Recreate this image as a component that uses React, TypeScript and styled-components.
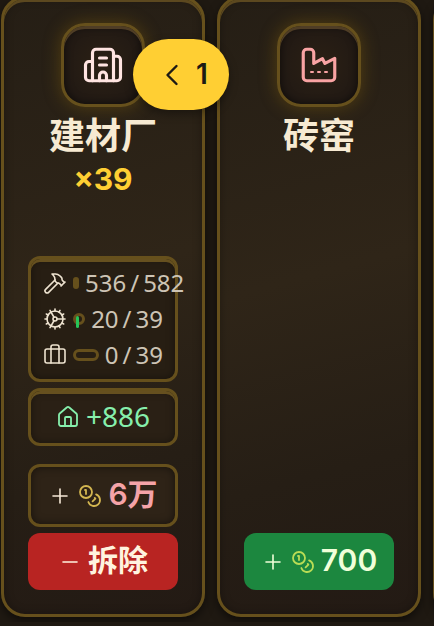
import React from "react";
import styled, { createGlobalStyle, css } from "styled-components";
import { Briefcase, Building2, ChevronLeft, Coins, Cog, Hammer, House, Minus, Plus } from "lucide-react";

const gold = "#66501c";

const GlobalStyle = createGlobalStyle`
  * { box-sizing: border-box; }
  html, body { margin: 0; height: 100%; }
  body {
    overflow: hidden;
    background: #1f1912;
    color: #f7ead2;
    font-family: Inter, "Noto Sans CJK SC", sans-serif;
  }
  button { font: inherit; cursor: pointer; }
`;

const Strip = styled.main`
  display: grid;
  grid-auto-flow: column;
  grid-auto-columns: 204px;
  gap: 12px;
  height: 100vh;
  margin-top: -4px;
  padding: 0 1px 5px;
  overflow: hidden;
`;

const raised = css`
  border: 3px solid ${gold};
  box-shadow: inset 0 3px 0 #66501f, inset 0 0 8px rgba(0, 0, 0, 0.4);
`;

const Card = styled.article`
  display: flex;
  flex-direction: column;
  align-items: center;
  padding: 24px;
  border: 3px solid ${gold};
  border-radius: 24px;
  background: linear-gradient(165deg, #251e15 0%, #2f2518 45%, #261e15 75%, #231a14 100%);
  box-shadow: inset 0 3px 0 #5c481f, inset 0 0 10px rgba(0, 0, 0, 0.3), 0 4px 10px rgba(0, 0, 0, 0.5);
`;

const Emblem = styled.div<{ $tint: string }>`
  display: grid;
  place-items: center;
  width: 84px;
  height: 84px;
  flex: none;
  color: ${(p) => p.$tint};
  border: 3px solid ${gold};
  border-radius: 24px;
  background: radial-gradient(circle, #2b2014 0%, #211914 80%);
  box-shadow: inset 0 3px 0 #4f3d25, inset 0 0 8px rgba(0, 0, 0, 0.6), 0 0 18px rgba(150, 110, 10, 0.4);
`;

const Name = styled.h2`
  margin: 5px 0 0;
  font-size: 36px;
  line-height: 48px;
  font-weight: 700;
`;

const Count = styled.div`
  margin-top: 1px;
  font-size: 30px;
  line-height: 36px;
  font-weight: 700;
  color: #ffcf33;
`;

const Footer = styled.div`
  display: flex;
  flex-direction: column;
  align-self: stretch;
  gap: 6px;
  margin-top: auto;
`;

const Stats = styled.div`
  ${raised}
  padding: 6px 12px;
  border-radius: 12px;
  background: #271e13;
`;

const StatRow = styled.div`
  display: flex;
  align-items: center;
  gap: 6px;
  height: 36px;
  color: #eee3d0;
  svg { flex: none; }
`;

const Meter = styled.div`
  flex: 1;
  min-width: 6px;
  height: 12px;
  border: 3px solid ${gold};
  border-radius: 6px;
`;

const Fill = styled.div`
  height: 12px;
  border-radius: 2px;
  background: #27c458;
`;

const Figure = styled.span`
  flex: none;
  font: 400 24px/36px "Noto Sans", sans-serif;
  color: #cdc4b5;
`;

const Slash = styled.span`
  margin: 0 4px;
`;

const Output = styled.div`
  ${raised}
  display: flex;
  align-items: center;
  justify-content: center;
  gap: 6px;
  height: 58px;
  margin-bottom: 12px;
  border-radius: 12px;
  background: #2a2015;
  color: #86efac;
  font: 400 28px/40px "Noto Sans", sans-serif;
`;

const OutputValue = styled.span`
  padding-bottom: 2px;
`;

const Action = styled.button<{ $kind: "outline" | "danger" | "buy" }>`
  display: flex;
  align-items: center;
  justify-content: center;
  gap: 6px;
  height: 57px;
  padding: 0;
  border: 0;
  border-radius: 12px;
  font-size: 30px;
  line-height: 36px;
  font-weight: 600;
  color: #fff3df;
  ${(p) => p.$kind === "danger" && css`background: #b82422;`}
  ${(p) => p.$kind === "buy" && css`background: #1c873f; color: #f0ffd9;`}
  ${(p) => p.$kind === "outline" && css`
    height: 63px;
    border: 3px solid ${gold};
    background: #2e2317;
    color: #f5a3a8;
    box-shadow: inset 0 0 8px rgba(0, 0, 0, 0.5);
  `}
`;

const ActionLabel = styled.span`
  padding-bottom: 4px;
`;

const PlusIcon = styled(Plus)<{ $tint: string }>`
  color: ${(p) => p.$tint};
`;

const CoinIcon = styled(Coins)<{ $tint: string }>`
  color: ${(p) => p.$tint};
`;

const BackPill = styled.button`
  position: absolute;
  top: 39px;
  left: 133px;
  display: flex;
  align-items: center;
  justify-content: center;
  gap: 6px;
  width: 96px;
  height: 71px;
  padding: 0;
  border: 0;
  border-radius: 36px;
  background: #ffcf33;
  color: #1d1a14;
  font-size: 28px;
  line-height: 36px;
  font-weight: 600;
  box-shadow: 0 4px 10px rgba(0, 0, 0, 0.35);
`;

const PillLabel = styled.span`
  padding-bottom: 2px;
`;

function KilnIcon() {
  return (
    <svg width="42" height="42" viewBox="0 0 24 24" fill="none" stroke="currentColor" strokeWidth="1.8" strokeLinejoin="round" aria-hidden="true">
      <path d="M3 19a2 2 0 0 0 2 2h14a2 2 0 0 0 2-2V8.2l-5.6 2.9L14 8.4l-5 2.7V5a2 2 0 0 0-2-2H5a2 2 0 0 0-2 2z" />
      <path d="M7 16h2M11 16h2M15 16h2" strokeWidth="1.2" />
    </svg>
  );
}

type StatProps = { icon: React.ReactNode; value: number; max: number; fill?: number };

function Stat({ icon, value, max, fill }: StatProps) {
  return (
    <StatRow>
      {icon}
      <Meter>{fill ? <Fill style={{ width: `${fill * 100}%` }} /> : null}</Meter>
      <Figure>{value}<Slash>/</Slash>{max}</Figure>
    </StatRow>
  );
}

export default function App() {
  return (
    <>
      <GlobalStyle />
      <Strip>
        <Card>
          <Emblem $tint="#ffe4e1"><Building2 size={42} strokeWidth={1.8} /></Emblem>
          <Name>建材厂</Name>
          <Count>×39</Count>
          <Footer>
            <Stats>
              <Stat icon={<Hammer size={24} strokeWidth={1.6} />} value={536} max={582} />
              <Stat icon={<Cog size={24} strokeWidth={1.6} />} value={20} max={39} fill={20 / 39} />
              <Stat icon={<Briefcase size={24} strokeWidth={1.6} />} value={0} max={39} />
            </Stats>
            <Output>
              <House size={24} strokeWidth={1.8} />
              <OutputValue>+886</OutputValue>
            </Output>
            <Action $kind="outline">
              <PlusIcon size={24} strokeWidth={1.6} $tint="#f6e9d8" />
              <CoinIcon size={24} strokeWidth={1.8} $tint="#d3b650" />
              <ActionLabel>6万</ActionLabel>
            </Action>
            <Action $kind="danger">
              <Minus size={24} strokeWidth={1.6} />
              <ActionLabel>拆除</ActionLabel>
            </Action>
          </Footer>
        </Card>
        <Card>
          <Emblem $tint="#f9a3a3"><KilnIcon /></Emblem>
          <Name>砖窑</Name>
          <Footer>
            <Action $kind="buy">
              <PlusIcon size={24} strokeWidth={1.6} $tint="#f0ffd9" />
              <CoinIcon size={24} strokeWidth={1.8} $tint="#b9dc55" />
              <ActionLabel>700</ActionLabel>
            </Action>
          </Footer>
        </Card>
        <Card />
      </Strip>
      <BackPill>
        <ChevronLeft size={36} strokeWidth={1.6} />
        <PillLabel>1</PillLabel>
      </BackPill>
    </>
  );
}
